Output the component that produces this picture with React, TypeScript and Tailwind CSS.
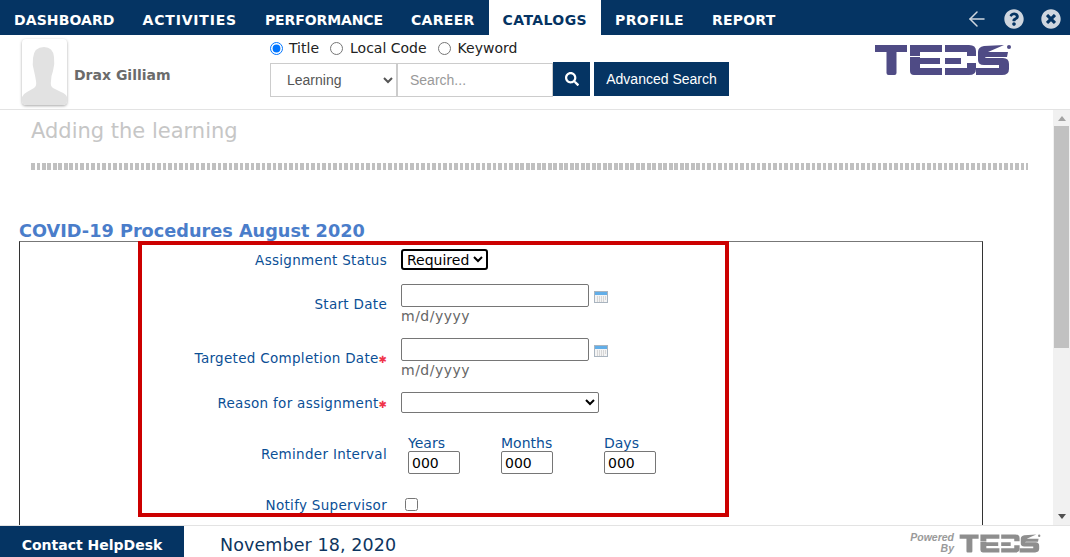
import React from 'react';
import { ArrowLeft } from 'lucide-react';
import { FaQuestionCircle, FaSearch, FaTimesCircle } from 'react-icons/fa';

const navItems = [
  { label: 'DASHBOARD', tracking: 'tracking-[0.1px]' },
  { label: 'ACTIVITIES', tracking: 'tracking-[0.8px]' },
  { label: 'PERFORMANCE', tracking: 'tracking-[-0.1px]' },
  { label: 'CAREER', tracking: 'tracking-[0.3px]' },
  { label: 'CATALOGS', tracking: 'tracking-[0.4px]' },
  { label: 'PROFILE', tracking: 'tracking-[0.4px]' },
  { label: 'REPORT', tracking: 'tracking-[0.2px]' },
];

function TedsLogo({ className, fill }: { className: string; fill: string }) {
  return (
    <svg viewBox="0 0 138 32" className={className} fill={fill}>
      <path d="M1 1h32v7H22.5v21q0 2-2 2h-6q-2 0-2-2V8H1z" />
      <path d="M36 1h32v7H46v4h-10zM36 13h10v1h20v6H46v4h22v7H40q-4 0-4-4z" />
      <path d="M71 1h24q7 0 7 6v5h-9V8H71zM71 14h16v6H71zM93 19h9v6q0 6-7 6H71v-7h22z" />
      <path d="M104 8q0-5 6-6l20-1-16 7h20l-1 5h-20q-2 0-2 1h18q6 0 6 6v5q0 6-7 6h-26v-7h23v-3h-15q-6 0-6-5z" />
      <circle cx="135" cy="3" r="2" />
    </svg>
  );
}

function Avatar() {
  return (
    <div className="flex h-[66px] w-[45px] shrink-0 items-end overflow-hidden rounded-sm bg-white shadow-[0_1px_3px_rgba(0,0,0,0.35)]">
      <svg viewBox="0 0 45 66" className="h-[66px] w-[45px]" fill="#e2e2e2">
        <path d="M0 66V58q1-3 5-5l7-4q3-2 2-7-1-6-2-10-2-6-1-13 1-11 11-11 9 0 10 10 1 7-1 14-2 5-2 10-1 5 2 7l8 4q5 2 6 5v8z" />
      </svg>
    </div>
  );
}

function CalendarIcon() {
  return (
    <svg viewBox="0 0 14 12" className="ml-[5px] mt-[7px] h-3 w-[14px] shrink-0">
      <rect x="0.5" y="0.5" width="13" height="11" fill="#f4f4f4" stroke="#a9b4bf" />
      <rect x="1" y="1" width="12" height="3" fill="#62aee8" />
      <path d="M3 6h1M5 6h1M7 6h1M9 6h1M11 6h1M3 8h1M5 8h1M7 8h1M9 8h1M11 8h1M3 10h1M5 10h1M7 10h1M9 10h1" stroke="#b8b8b8" />
    </svg>
  );
}

function Label({ children, required }: { children: React.ReactNode; required?: boolean }) {
  return (
    <div className="w-[245px] shrink-0 text-right text-[13.5px] leading-4 tracking-[0.3px] text-[#0b4f96]">
      {children}
      {required && <span className="text-[10px] leading-none tracking-normal text-[#f0344a]">✱</span>}
    </div>
  );
}

function DateRow({ label, required, className }: { label: string; required?: boolean; className: string }) {
  return (
    <div className={`flex ${className}`}>
      <div className="mt-3 self-start">
        <Label required={required}>{label}</Label>
      </div>
      <div className="ml-[14px]">
        <div className="flex">
          <input type="text" className="h-[23px] w-[188px] rounded-[2px] border border-[#767676] bg-white" />
          <CalendarIcon />
        </div>
        <div className="text-[14px] leading-[18px] tracking-[0.5px] text-[#666]">m/d/yyyy</div>
      </div>
    </div>
  );
}

function IntervalField({ label, className }: { label: string; className: string }) {
  return (
    <div className={className}>
      <div className="text-[14px] leading-[16px] text-[#0b4f96]">{label}</div>
      <input
        type="text"
        defaultValue="000"
        className="block h-[23px] w-[52px] rounded-[2px] border border-[#767676] bg-white px-[3px] text-[14px] text-black"
      />
    </div>
  );
}

export default function App() {
  return (
    <div className="flex h-screen flex-col overflow-hidden bg-white font-['DejaVu_Sans',sans-serif]">
      <nav className="flex h-[35px] shrink-0 items-stretch bg-[#053463]">
        {navItems.map((item) => (
          <div
            key={item.label}
            className={`flex items-center px-[14px] pt-[6px] text-[14px] font-bold ${item.tracking} ${
              item.label === 'CATALOGS' ? 'bg-white text-[#053463]' : 'text-white'
            }`}
          >
            {item.label}
          </div>
        ))}
        <div className="ml-auto flex items-center pr-[9px] pt-[2px]">
          <ArrowLeft className="h-6 w-6 text-[#cfd6df]" strokeWidth={1.5} />
          <FaQuestionCircle className="ml-[15px] h-5 w-5 text-[#cfd6df]" />
          <FaTimesCircle className="ml-[17px] h-5 w-5 text-[#cfd6df]" />
        </div>
      </nav>

      <header className="flex h-[75px] shrink-0 border-b border-[#e3e3e3] pl-[22px] pt-1">
        <Avatar />
        <div className="ml-[7px] mt-[26px] w-[196px] text-[14px] font-bold text-[#6b6b6b]">Drax Gilliam</div>
        <div className="w-[459px]">
          <div className="flex h-[19px] items-center text-[14px] text-[#222]">
            <input type="radio" name="searchType" defaultChecked className="m-0 h-[13px] w-[13px]" />
            <span className="ml-[6px]">Title</span>
            <input type="radio" name="searchType" className="m-0 ml-[11px] h-[13px] w-[13px]" />
            <span className="ml-[7px]">Local Code</span>
            <input type="radio" name="searchType" className="m-0 ml-[11px] h-[13px] w-[13px]" />
            <span className="ml-[7px]">Keyword</span>
          </div>
          <div className="mt-1 flex font-['Liberation_Sans',sans-serif] text-[14px]">
            <select className="mt-[1px] h-[34px] w-[127px] rounded-none border border-[#ccc] bg-white pl-3 text-[14px] text-[#555]">
              <option>Learning</option>
            </select>
            <input
              type="text"
              placeholder="Search..."
              className="mt-[1px] h-[34px] w-[156px] border border-[#ccc] bg-white px-3 text-[14px] placeholder:text-[#999]"
            />
            <button className="flex h-[34px] w-[37px] items-center justify-center bg-[#053463] text-white">
              <FaSearch className="h-[14px] w-[14px]" />
            </button>
            <button className="ml-1 h-[34px] w-[135px] bg-[#053463] text-[14px] text-white">Advanced Search</button>
          </div>
        </div>
        <TedsLogo className="ml-[144px] mt-[5px] h-[32px] w-[140px]" fill="#4f4b85" />
      </header>

      <div className="flex min-h-0 flex-1">
        <main className="min-w-0 flex-1 overflow-hidden pt-[7px]">
          <h1 className="ml-[31px] text-[21px] font-normal leading-[28px] text-[#c6c6c6]">Adding the learning</h1>
          <div className="ml-[31px] mt-[18px] h-[7px] w-[997px] bg-[repeating-linear-gradient(90deg,#c0c0c0_0_3.5px,transparent_3.5px_5.5px)]" />
          <h2 className="ml-[19px] mt-[51px] text-[17.7px] font-bold leading-[20px] text-[#4a7dca]">COVID-19 Procedures August 2020</h2>
          <div className="ml-[19px] h-[330px] w-[964px] border border-[#333] border-t-[#777]">
            <div className="-mt-px ml-[118px] h-[276px] w-[591px] border-4 border-[#cc0000]">
              <div className="flex pt-[4px]">
                <div className="mt-[3px]"><Label>Assignment Status</Label></div>
                <select className="ml-[14px] h-[21px] w-[87px] rounded-[3px] border-2 border-black bg-white text-[14px] leading-none text-black">
                  <option>Required</option>
                </select>
              </div>
              <DateRow label="Start Date" className="mt-[14px]" />
              <DateRow label="Targeted Completion Date" required className="mt-[13px]" />
              <div className="mt-[13px] flex items-center">
                <Label required>Reason for assignment</Label>
                <select className="ml-[14px] h-[21px] w-[198px] rounded-[2px] border border-[#767676] bg-white" />
              </div>
              <div className="mt-[22px] flex">
                <div className="mt-[11px]"><Label>Reminder Interval</Label></div>
                <IntervalField label="Years" className="ml-[21px]" />
                <IntervalField label="Months" className="ml-[41px]" />
                <IntervalField label="Days" className="ml-[51px]" />
              </div>
              <div className="mt-[21px] flex items-center">
                <div className="pt-[2px]"><Label>Notify Supervisor</Label></div>
                <input type="checkbox" className="m-0 ml-[18px] h-[13px] w-[13px]" />
              </div>
            </div>
          </div>
        </main>
        <div className="flex w-[17px] shrink-0 flex-col items-center bg-[#f1f1f1]">
          <svg viewBox="0 0 8 5" className="mt-[6px] h-[5px] w-2" fill="#a3a3a3"><path d="M4 0l4 5H0z" /></svg>
          <div className="mt-[5px] h-[222px] w-[15px] bg-[#c1c1c1]" />
          <svg viewBox="0 0 8 5" className="mb-[6px] mt-auto h-[5px] w-2" fill="#505050"><path d="M0 0h8L4 5z" /></svg>
        </div>
      </div>

      <footer className="flex h-[32px] shrink-0 items-stretch border-t border-[#e3e3e3]">
        <div className="flex w-[184px] items-center justify-center bg-[#053463] pt-2 text-[14px] font-bold text-white">Contact HelpDesk</div>
        <div className="ml-9 flex items-center pt-2 text-[17.5px] tracking-[0.1px] text-[#0d3560]">November 18, 2020</div>
        <div className="ml-auto mr-[28px] flex items-center pt-[3px]">
          <div className="text-right font-['Liberation_Sans',sans-serif] text-[10.5px] font-bold italic leading-[11px] text-[#9a9a9a]">Powered<br />By</div>
          <TedsLogo className="ml-[4px] h-[19px] w-[84px]" fill="#8e8e8e" />
        </div>
      </footer>
    </div>
  );
}
